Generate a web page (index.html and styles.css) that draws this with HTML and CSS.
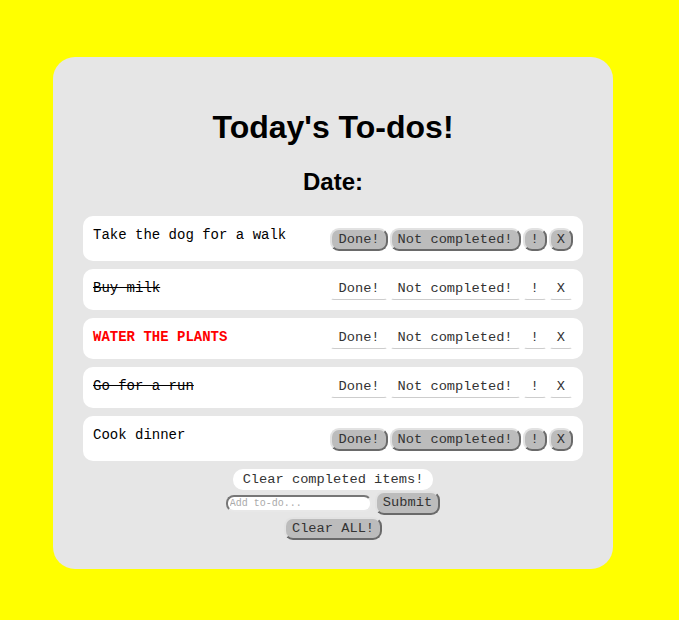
FILE: index.html
```html
<!DOCTYPE html>
<html>
<head>
<meta charset="utf-8">
<link rel="stylesheet" href="styles.css">
</head>
<body>
<div class="card">
  <h1 class="title">Today's To-dos!</h1>
  <h2 class="date">Date:</h2>
  <ul class="list">
    <li class="row">
      <span class="task">Take the dog for a walk</span>
      <span class="actions">
        <button class="btn">Done!</button><button class="btn">Not completed!</button><button class="btn">!</button><button class="btn">X</button>
      </span>
    </li>
    <li class="row row-flat">
      <span class="task task-done">Buy milk</span>
      <span class="actions">
        <button class="btn btn-flat">Done!</button><button class="btn btn-flat">Not completed!</button><button class="btn btn-flat">!</button><button class="btn btn-flat">X</button>
      </span>
    </li>
    <li class="row row-flat">
      <span class="task task-urgent">WATER THE PLANTS</span>
      <span class="actions">
        <button class="btn btn-flat">Done!</button><button class="btn btn-flat">Not completed!</button><button class="btn btn-flat">!</button><button class="btn btn-flat">X</button>
      </span>
    </li>
    <li class="row row-flat">
      <span class="task task-done">Go for a run</span>
      <span class="actions">
        <button class="btn btn-flat">Done!</button><button class="btn btn-flat">Not completed!</button><button class="btn btn-flat">!</button><button class="btn btn-flat">X</button>
      </span>
    </li>
    <li class="row">
      <span class="task">Cook dinner</span>
      <span class="actions">
        <button class="btn">Done!</button><button class="btn">Not completed!</button><button class="btn">!</button><button class="btn">X</button>
      </span>
    </li>
  </ul>
  <div class="footer">
    <button class="btn btn-white">Clear completed items!</button>
    <form class="add">
      <input class="add-input" type="text" placeholder="Add to-do...">
      <button class="btn btn-submit" type="button">Submit</button>
    </form>
    <button class="btn btn-clear">Clear ALL!</button>
  </div>
</div>
</body>
</html>
```
FILE: styles.css
```css
html, body {
  margin: 0;
  padding: 0;
  background: #ffff00;
}

body {
  padding: 57px 0 50px 53px;
}

.card {
  width: 500px;
  background: #e6e6e6;
  border-radius: 22px;
  padding: 52px 30px 29px 30px;
  font-family: "Liberation Sans", Arial, sans-serif;
}

.title {
  margin: 0;
  font-size: 32px;
  line-height: 37px;
  font-weight: bold;
  text-align: center;
  color: #000;
}

.date {
  margin: 22px 0 0 0;
  font-size: 24px;
  line-height: 28px;
  font-weight: bold;
  text-align: center;
  color: #000;
}

.list {
  list-style: none;
  margin: 20px 0 0 0;
  padding: 0;
  display: flex;
  flex-direction: column;
  gap: 8px;
}

.row {
  background: #fff;
  border-radius: 10px;
  padding: 10px 10px 10px 10px;
  display: flex;
  justify-content: space-between;
  align-items: flex-start;
}

.task {
  font-family: "Courier New", Courier, "Nimbus Mono PS", FreeMono, "Liberation Mono", monospace;
  font-size: 14px;
  line-height: 16px;
  margin-top: 1px;
  color: #000;
}

.task-done {
  text-decoration: line-through;
}

.task-urgent {
  color: #ff0000;
  font-weight: bold;
}

.actions {
  display: flex;
  gap: 2px;
  margin-top: 2px;
}

.row-flat .actions {
  margin-top: 0;
}

.btn {
  font-family: "Courier New", Courier, "Nimbus Mono PS", FreeMono, "Liberation Mono", monospace;
  font-size: 13.7px;
  line-height: 15px;
  color: #333;
  background: #bcbcbc;
  border: 2px solid;
  border-color: #e2e2e2 #6a6a6a #6a6a6a #e2e2e2;
  border-radius: 9px;
  padding: 2px 6px;
  margin: 0;
  cursor: pointer;
}

.btn-flat {
  background: transparent;
  border-top: 0;
  border-left-color: transparent;
  border-right-color: transparent;
  border-bottom-color: #cdcdcd;
  border-bottom-width: 1px;
  padding-bottom: 3px;
  border-radius: 0 0 4px 4px;
}

.footer {
  margin-top: 8px;
  display: flex;
  flex-direction: column;
  align-items: center;
  gap: 1px;
}

.btn-white {
  background: #fff;
  border-color: #fff;
  border-radius: 10px;
  padding: 1px 8px;
}

.add {
  display: flex;
  align-items: center;
  gap: 3px;
  margin: 0;
}

.add-input {
  width: 138px;
  height: 13px;
  box-sizing: content-box;
  padding: 0 2px;
  margin: 0;
  border: 2px solid;
  border-color: #777 #e8e8e8 #e8e8e8 #777;
  border-radius: 8px;
  background: #fff;
  font-family: "Courier New", Courier, "Nimbus Mono PS", FreeMono, "Liberation Mono", monospace;
  font-size: 10px;
  line-height: 13px;
  color: #333;
  outline: none;
}

.add-input::placeholder {
  color: #aaa;
}

.btn-submit {
  padding: 2px 6px 3px 6px;
}

.btn-clear {
  padding: 2px 6px;
  margin-top: 1px;
}
```
